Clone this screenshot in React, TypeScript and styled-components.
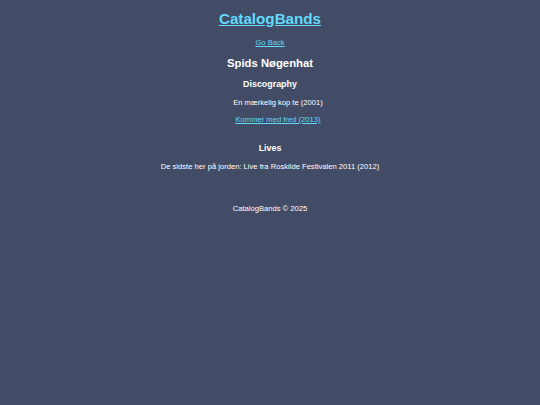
import React from "react";
import styled, { createGlobalStyle } from "styled-components";

const Global = createGlobalStyle`
  html, body { margin: 0; padding: 0; background: #424c66; }
  body { font-family: "Liberation Sans", Arial, sans-serif; color: #ffffff; }
`;

const Page = styled.div`
  min-height: 405px;
  display: flex;
  flex-direction: column;
  align-items: center;
  text-align: center;
  font-size: 7.62px;
  line-height: 1.15;
`;

const Title = styled.h1`
  font-size: 15.2px;
  margin: 10px 0 0;
  a { color: #61dafb; }
`;

const Link = styled.a`
  color: #61dafb;
  text-decoration: underline;
`;

const Nav = styled.p`
  margin: 12px 0 0;
`;

const BandName = styled.h2`
  font-size: 11.3px;
  margin: 8.5px 0 0;
`;

const Section = styled.section`
  display: flex;
  flex-direction: column;
  align-items: center;
  margin-bottom: 9px;
`;

const SectionTitle = styled.h3`
  font-size: 8.9px;
  margin: 9px 0 2.5px;
`;

const List = styled.ul`
  list-style: none;
  margin: 0;
  padding: 0 0 0 16px;
`;

const Item = styled.li`
  margin: 7.8px 0 0;
`;

const Text = styled.p`
  margin: 7.8px 0 0;
`;

const Footer = styled.footer`
  margin-top: 24px;
`;

export default function App() {
  return (
    <>
      <Global />
      <Page>
        <Title>
          <a href="#">CatalogBands</a>
        </Title>
        <Nav>
          <Link href="#">Go Back</Link>
        </Nav>
        <BandName>Spids Nøgenhat</BandName>
        <Section>
          <SectionTitle>Discography</SectionTitle>
          <List>
            <Item>En mærkelig kop te (2001)</Item>
            <Item>
              <Link href="#">Kommer med fred (2013)</Link>
            </Item>
          </List>
        </Section>
        <Section>
          <SectionTitle>Lives</SectionTitle>
          <Text>De sidste her på jorden: Live fra Roskilde Festivalen 2011 (2012)</Text>
        </Section>
        <Footer>CatalogBands © 2025</Footer>
      </Page>
    </>
  );
}
